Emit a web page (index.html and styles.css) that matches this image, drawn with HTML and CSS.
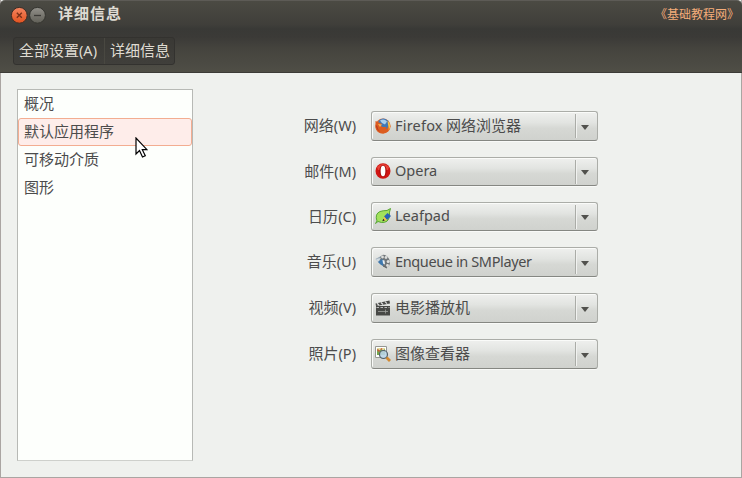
FILE: index.html
```html
<!DOCTYPE html>
<html lang="zh-CN">
<head>
<meta charset="utf-8">
<title>详细信息</title>
<link rel="stylesheet" href="styles.css">
</head>
<body>
<div class="window">
  <header class="header">
    <div class="titlebar">
      <svg class="controls" width="36" height="18" viewBox="0 0 36 18">
        <defs>
          <linearGradient id="close" x2="0" y2="1"><stop stop-color="#f58661"/><stop offset="1" stop-color="#e2521f"/></linearGradient>
          <linearGradient id="min" x2="0" y2="1"><stop stop-color="#92908a"/><stop offset="1" stop-color="#605f57"/></linearGradient>
        </defs>
        <circle cx="8.300" cy="9.300" r="7.900" fill="url(#close)" stroke="#3c2d26"/>
        <path d="M5.800 6.800l5 5M10.800 6.800l-5 5" stroke="#7a3018" stroke-width="1.400"/>
        <circle cx="26.500" cy="9.300" r="7.900" fill="url(#min)" stroke="#34342f"/>
        <path d="M23 9.500h7" stroke="#3c3b37" stroke-width="1.300"/>
      </svg>
      <h1 class="title">详细信息</h1>
      <span class="brand">《基础教程网》</span>
    </div>
    <nav class="crumbs">
      <span class="crumb crumb-all">全部设置<span class="latin">(A)</span></span>
      <span class="crumb">详细信息</span>
    </nav>
  </header>
  <main class="content">
    <ul class="list">
      <li class="item">概况</li>
      <li class="item selected">默认应用程序
        <svg class="pointer" width="13" height="21" viewBox="0 0 13 21"><path d="M1 1v16l3.500-3.500 3 6.500 2.800-1.300-3-6H12z" fill="#fff" stroke="#000" stroke-width="1.200"/></svg>
      </li>
      <li class="item">可移动介质</li>
      <li class="item">图形</li>
    </ul>
    <div class="form">
      <label class="label">网络<span class="latin">(W)</span></label>
      <div class="combo">
        <svg class="icon" width="16" height="16" viewBox="0 0 16 16"><circle cx="8" cy="8" r="7.600" fill="#e0672c"/><circle cx="8.400" cy="6.200" r="5.700" fill="#4278b5"/><path d="M5 2.500q4-2.500 7 1L10 6.500 7 5z" fill="#a9cfec"/><path d="M.5 3l2.500 1 4 2-1.500 1.500 2 1.500h4l-1 2q3-1 3.500-4l1.500 1q-1 6-7 7.500-7 0-8-6z" fill="#dc5d20"/><path d="M12.500 2.500q5 5 1 10 .5-3-.5-6z" fill="#f7c34a"/><path d="M3 6l4 .5-2 2.500z" fill="#f3b25b"/><path d="M.8 7q.5 5 4.500 7-3-3-3-6z" fill="#b93a22"/></svg>
        <span class="value"><span class="latin firefox">Firefox</span> 网络浏览器</span><span class="arrow"></span>
      </div>
      <label class="label">邮件<span class="latin">(M)</span></label>
      <div class="combo">
        <svg class="icon" width="16" height="16" viewBox="0 0 16 16"><ellipse cx="8" cy="8" rx="7.500" ry="7.700" fill="#cf1512"/><path d="M2 4Q8-2 14 4l-1 3H3z" fill="#e84236"/><ellipse cx="8" cy="8" rx="3.700" ry="6" fill="#a90d0b"/><ellipse cx="8" cy="8" rx="2.400" ry="5.300" fill="#fff"/></svg>
        <span class="value latin">Opera</span><span class="arrow"></span>
      </div>
      <label class="label">日历<span class="latin">(C)</span></label>
      <div class="combo">
        <svg class="icon" width="16" height="16" viewBox="0 0 16 16"><path d="M.5 15.500L2 13Q-.5 6 5 3.500q3-1 7-1L15.500.5Q14 4 14.500 8q-1 7-8 6.500L3 13.500z" fill="#a2e25c" stroke="#58a634"/><path d="M9 8.500L12.500 5 16 8l-4 4z" fill="#2862b6"/><path d="M9 8.500l3 3.500-4 1z" fill="#f2bd47"/><path d="M7.300 13.300l1-2.500 1.500 1.700z" fill="#222"/></svg>
        <span class="value latin">Leafpad</span><span class="arrow"></span>
      </div>
      <label class="label">音乐<span class="latin">(U)</span></label>
      <div class="combo">
        <svg class="icon" width="16" height="16" viewBox="0 0 16 16"><path d="M.5 5L6 2l5 4-1 6-4-1z" fill="#94a5b2"/><ellipse cx="10" cy="7" rx="4.500" ry="6.500" fill="#71777a" transform="rotate(-25 10 7)"/><g fill="#dedfdd"><circle cx="7.500" cy="3" r="1.400"/><circle cx="11" cy="3.500" r="1.400"/><circle cx="13.200" cy="7.500" r="1.500"/><circle cx="12.500" cy="11.500" r="1.400"/></g><path d="M1 5l5-1-3 4z" fill="#d2dce2"/><path d="M3 8l4-3 2 2-1 5-3-2z" fill="#3e78ae"/><path d="M7.500 6l2 .5.500 4-2-1z" fill="#ecf1f4"/><path d="M8 12l4 2" stroke="#55595c" fill="none"/></svg>
        <span class="value latin enqueue">Enqueue in SMPlayer</span><span class="arrow"></span>
      </div>
      <label class="label">视频<span class="latin">(V)</span></label>
      <div class="combo">
        <svg class="icon" width="16" height="16" viewBox="0 0 16 16"><path d="M1 6h14v9.500H1z" fill="#484946"/><path d="M.5 3.500L14.500.5l.5 3L1 6z" fill="#484946"/><path d="M2 3.300l2 2M6 2.500l2 2M10 1.600l2 2" stroke="#ddd" stroke-width="1.300"/><path d="M1.500 7.500h13" stroke="#bbb" stroke-width="1.200" stroke-dasharray="2.500 1.500"/><path d="M3 11.500h10M10.500 9.500v4" stroke="#a0a19d" stroke-width=".8"/></svg>
        <span class="value">电影播放机</span><span class="arrow"></span>
      </div>
      <label class="label">照片<span class="latin">(P)</span></label>
      <div class="combo">
        <svg class="icon" width="16" height="16" viewBox="0 0 16 16"><path d="M.5.500h11v11H.5z" fill="#fff" stroke="#969893"/><path d="M2 2h8v3H2z" fill="#e3dda0"/><path d="M2 3l2 1.500 2-1.500 2 1.500L10 3v6H2z" fill="#76a64e"/><path d="M2.500 3.500l2 2M6 2.500l1 1" stroke="#d45438" stroke-width="1.500"/><circle cx="8.500" cy="8.500" r="4" fill="#b9d5e7" fill-opacity=".9" stroke="#53616a" stroke-width="1.200"/><path d="M11.500 11.500l3.500 3.500" stroke="#d28a32" stroke-width="2.800"/></svg>
        <span class="value">图像查看器</span><span class="arrow"></span>
      </div>
    </div>
  </main>
</div>
</body>
</html>
```

FILE: styles.css
```css
* { box-sizing: border-box; }
body {
  margin: 0;
  background: #55534f;
  font: 15px/28px "Noto Sans CJK SC", sans-serif;
  color: #4c4c4c;
}
.window {
  width: 742px;
  height: 478px;
  display: flex;
  flex-direction: column;
  border: 1px solid #aaa5a2;
  border-top: 0;
  background: #eff1ee;
}
.header {
  height: 73px;
  margin: 0 -1px;
  padding: 0 1px;
  flex: none;
  border-radius: 5px 5px 0 0;
  border-top: 1px solid #5d5b56;
  border-bottom: 1px solid #3c3b37;
  background: linear-gradient(#4b4a43 0, #3f3e3a 24px, #393936 28px, #3b3a37 36px, #45443e 48px, #4f4e46 71px);
  color: #dfdbd2;
}
.titlebar {
  height: 28px;
  display: flex;
  padding: 5px 6px 0 10px;
  line-height: 18px;
}
.controls { flex: none; }
.title {
  margin: -2px 0 0 11px;
  font-size: 15px;
  line-height: 18px;
  font-weight: 700;
  letter-spacing: 1px;
}
.brand {
  margin: -1px -4px 0 auto;
  font-size: 12px;
  color: #f5ad7a;
}
.crumbs {
  width: 162px;
  height: 28px;
  margin: 8px 0 0 12px;
  display: flex;
  border: 1px solid #33322f;
  border-radius: 3px;
  background: linear-gradient(#3a3935, #403f3b);
  line-height: 24px;
}
.crumb { padding-left: 5px; white-space: nowrap; }
.crumb-all { width: 91px; border-right: 1px solid #494841; }
.latin {
  font-family: "Noto Sans", "Noto Sans CJK SC", sans-serif;
  font-size: 14.500px;
}
.firefox { letter-spacing: .2px; }
.enqueue { letter-spacing: -.38px; }
.content {
  flex: 1;
  display: flex;
  padding: 16px 0 0 16px;
}
.list {
  width: 176px;
  height: 372px;
  margin: 0;
  padding: 0;
  list-style: none;
  border: 1px solid #b7b9b5;
  border-bottom-color: #ced0cc;
  background: #fdfffc;
}
.item { height: 28px; padding-left: 6px; line-height: 25px; }
.selected {
  position: relative;
  padding-left: 5px;
  line-height: 23px;
  border: 1px solid #f3ad91;
  border-radius: 3px;
  background: #feedea;
}
.pointer { position: absolute; left: 116px; top: 18px; z-index: 1; }
.form {
  margin: 22px 0 0 78px;
  display: grid;
  grid-template-columns: 85px 227px;
  grid-template-rows: 30px 29px 29px 30px 30px 30px;
  gap: 16px 15px;
  height: 258px;
}
.label { text-align: right; line-height: 28px; white-space: nowrap; }
.combo {
  display: flex;
  align-items: center;
  padding-left: 3px;
  border: 1px solid #abada8;
  border-bottom-color: #858782;
  border-radius: 3px;
  background: linear-gradient(#eff0ee 0, #e2e4e1 38%, #d6d8d4 58%, #d0d2ce 100%);
  box-shadow: inset 1px 1px #fafbf9, 0 1px #f9faf8;
}
.icon { flex: none; margin-top: -1px; }
.value {
  flex: 1;
  padding-left: 4px;
  line-height: 26px;
  margin-top: -3px;
  white-space: nowrap;
}
.arrow {
  width: 22px;
  height: 24px;
  display: flex;
  align-items: center;
  justify-content: center;
  border-left: 1px solid #aaaca7;
  box-shadow: inset 1px 0 #f1f2f0;
  padding-top: 2px;
  padding-right: 3px;
}
.arrow::before {
  content: "";
  border: 4px solid transparent;
  border-top: 5px solid #51514d;
  border-bottom: 0;
}
```
